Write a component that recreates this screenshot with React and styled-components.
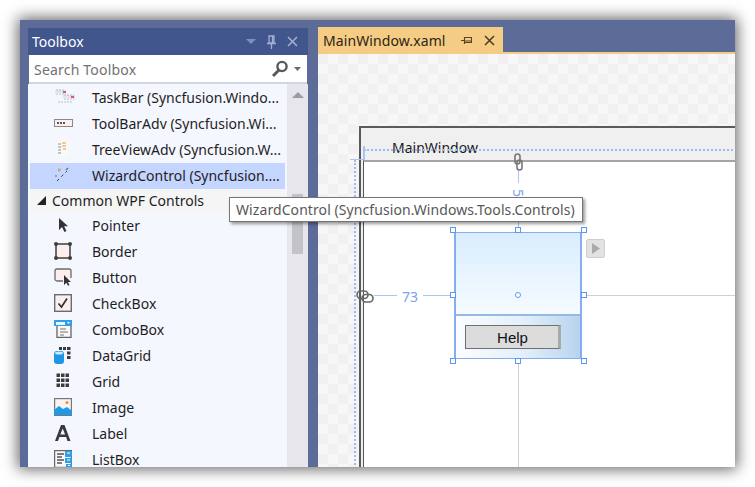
import React from "react";
import styled, { createGlobalStyle } from "styled-components";

const Global = createGlobalStyle`
  html, body {
    margin: 0;
    background: #fff;
    overflow: hidden;
  }
`;

const Page = styled.div`
  width: 755px;
  height: 487px;
  padding: 20px;
  box-sizing: border-box;
  font-family: "Noto Sans", "Open Sans", sans-serif;
`;

const Frame = styled.div`
  width: 715px;
  height: 447px;
  display: flex;
  padding: 8px 0 0 8px;
  gap: 10px;
  box-sizing: border-box;
  background: #5d6b99;
  box-shadow: 0 0 14px 2px rgba(0, 0, 0, 0.62);
  overflow: hidden;
`;

const Panel = styled.div`
  width: 280px;
  display: flex;
  flex-direction: column;
  flex-shrink: 0;
`;

const TitleBar = styled.div`
  height: 27px;
  display: flex;
  align-items: center;
  padding: 0 10px 0 4px;
  background: #40568d;
  color: #fff;
  font-size: 14px;
`;

const TitleText = styled.span`
  flex: 1;
`;

const TitleIcons = styled.div`
  display: flex;
  align-items: center;
  gap: 11px;
`;

const Search = styled.div`
  height: 26px;
  margin: 0 1px;
  display: flex;
  align-items: center;
  padding: 1px 5px 0;
  box-sizing: content-box;
  background: #fff;
  color: #717171;
  font-size: 14px;
  letter-spacing: 0.2px;
  border-bottom: 2px solid #cfd6e5;
`;

const SearchText = styled.span`
  flex: 1;
`;

const Body = styled.div`
  flex: 1;
  display: flex;
  min-height: 0;
  background: #f5f7ff;
`;

const List = styled.div`
  flex: 1;
  padding: 1px 2px 0;
  overflow: hidden;
`;

const Row = styled.div`
  height: ${(p) => (p.$group ? "24px" : "26px")};
  box-sizing: border-box;
  padding-bottom: 2px;
  display: flex;
  align-items: center;
  background: ${(p) => (p.$selected ? "#c4d5ff" : p.$group ? "#f5f5f5" : "transparent")};
  color: #1e1e1e;
  font-size: 14px;
  white-space: nowrap;
`;

const IconSlot = styled.span`
  width: 62px;
  padding-left: 24px;
  box-sizing: border-box;
  display: flex;
  flex-shrink: 0;
`;

const Arrow = styled.span`
  width: 22px;
  padding-left: 7px;
  box-sizing: border-box;
  display: flex;
`;

const Scrollbar = styled.div`
  width: 21px;
  position: relative;
  background: #e6e6ec;
  display: flex;
  flex-direction: column;
  align-items: center;
  padding-top: 8px;
  box-sizing: border-box;
`;

const Thumb = styled.div`
  position: absolute;
  top: 110px;
  left: 5px;
  width: 11px;
  height: 60px;
  background: #c2c3c9;
`;

const Doc = styled.div`
  flex: 1;
  display: flex;
  flex-direction: column;
  min-width: 0;
`;

const TabStrip = styled.div`
  height: 25px;
  display: flex;
  align-items: flex-end;
  margin-top: -1px;
  border-bottom: 2px solid #f5cc84;
  box-sizing: content-box;
`;

const Tab = styled.div`
  width: 185px;
  height: 25px;
  display: flex;
  align-items: center;
  box-sizing: border-box;
  padding: 1px 8px 0 5px;
  background: #f5cc84;
  color: #2d2516;
  font-size: 14px;
  letter-spacing: 0.1px;
`;

const TabTitle = styled.span`
  flex: 1;
`;

const TabIcons = styled.div`
  display: flex;
  align-items: center;
  gap: 12px;
`;

const Canvas = styled.div`
  flex: 1;
  position: relative;
  overflow: hidden;
  background: repeating-conic-gradient(#f7f7f7 0 25%, #f1f1f1 0 50%) 0 0 / 20px 20px;
`;

/* everything below sits on the designer surface, so it is placed by coordinates
   relative to the canvas origin (318, 54 in the page) */
const DesignWindow = styled.div`
  position: absolute;
  left: 41px;
  top: 72px;
  width: 400px;
  height: 360px;
  border: 1px solid #5a5a5a;
  border-top-width: 2px;
  border-left-width: 2px;
  background: #f0f0f0;
`;

const WindowTitle = styled.div`
  position: absolute;
  left: 31px;
  top: 10px;
  color: #1a1a1a;
  font-size: 14px;
`;

const ClientArea = styled.div`
  position: absolute;
  left: 2px;
  top: 32px;
  right: 0;
  bottom: 0;
  background: #fff;
  border-top: 2px solid #a5a5a5;
  border-left: 1px solid #555;
`;

const DotLine = styled.div`
  position: absolute;
  left: ${(p) => p.$x}px;
  top: ${(p) => p.$y}px;
  ${(p) =>
    p.$vertical
      ? "height: 340px; border-left: 2px dotted #9dbcf2;"
      : "width: 400px; border-top: 2px dotted #9dbcf2;"}
`;

const Tick = styled.div`
  position: absolute;
  left: ${(p) => p.$x}px;
  top: ${(p) => p.$y}px;
  width: ${(p) => p.$w}px;
  height: ${(p) => p.$h}px;
  background: ${(p) => p.$color || "#a9c5f5"};
`;

const Measure = styled.div`
  position: absolute;
  left: ${(p) => p.$x}px;
  top: ${(p) => p.$y}px;
  color: #7ba3ec;
  font-size: 14px;
  line-height: 16px;
  transform: ${(p) => (p.$rotate ? "rotate(90deg)" : "none")};
`;

const LinkIcon = styled.div`
  position: absolute;
  left: ${(p) => p.$x}px;
  top: ${(p) => p.$y}px;
  display: flex;
`;

const Wizard = styled.div`
  position: absolute;
  left: 136px;
  top: 178px;
  width: 128px;
  height: 127px;
  box-sizing: border-box;
  border: solid #86adf2;
  border-width: 1px 2px;
  display: flex;
  flex-direction: column;
`;

const WizardTop = styled.div`
  height: 83px;
  box-sizing: border-box;
  background: linear-gradient(#d9edff, #f6fbff);
  border-bottom: 2px solid #94b9e4;
`;

const WizardBottom = styled.div`
  flex: 1;
  padding: 9px 0 0 9px;
  background: linear-gradient(90deg, #fbfdff 0%, #e2effa 55%, #b7d4ee 100%);
`;

const HelpButton = styled.div`
  width: 96px;
  height: 24px;
  box-sizing: border-box;
  display: flex;
  align-items: center;
  justify-content: center;
  padding-left: 1px;
  background: #dcdcdc;
  border: 1px solid #707070;
  border-right: 3px solid #a9a9a9;
  font-family: "Liberation Sans", Arial, sans-serif;
  font-size: 15px;
  color: #111;
`;

const Handle = styled.div`
  position: absolute;
  left: ${(p) => p.$x}px;
  top: ${(p) => p.$y}px;
  width: 4px;
  height: 4px;
  background: #fff;
  border: 1px solid #6096f0;
  border-radius: ${(p) => (p.$round ? "50%" : "0")};
`;

const SmartTag = styled.div`
  position: absolute;
  left: 268px;
  top: 185px;
  width: 19px;
  height: 19px;
  box-sizing: border-box;
  display: flex;
  align-items: center;
  justify-content: center;
  background: #e2e2e2;
  border: 1px solid #cfcfcf;
  border-radius: 2px;
`;

const Tooltip = styled.div`
  position: absolute;
  left: 229px;
  top: 197px;
  height: 25px;
  width: 354px;
  box-sizing: border-box;
  padding-left: 6px;
  display: flex;
  align-items: center;
  background: #fff;
  border: 1px solid #767676;
  box-shadow: 2px 2px 3px rgba(0, 0, 0, 0.4);
  color: #575757;
  font-size: 14px;
  letter-spacing: 0.08px;
  white-space: nowrap;
`;

const Ic = ({ children, w = 26, h = 18 }) => (
  <svg width={w} height={h} viewBox="0 0 26 18" fill="none">
    {children}
  </svg>
);

const icons = {
  taskbar: (
    <Ic>
      <path d="M1 2h11v3H1zM9 7h12v3H9z" fill="#dfe6ee" />
      <path d="M2 2h8M2 6h10M10 7h10M10 11h11M4 14h14" stroke="#a7b3c2" strokeWidth="0.8" strokeDasharray="2 1" />
      <path d="M9 3h3v2H9zM17 8h3v2h-3z" fill="#e0566b" />
    </Ic>
  ),
  toolbar: (
    <Ic>
      <rect x="0.5" y="5.5" width="18" height="7" fill="#fbeeee" stroke="#8a8a8a" />
      <path d="M3 8h2v2H3zM6 8h2v2H6zM9 8h2v2H9z" fill="#555" />
    </Ic>
  ),
  tree: (
    <Ic>
      <rect x="3" y="1" width="11" height="15" fill="#fbf9f4" />
      <path d="M4 4h3M4 7h3M4 10h3M4 13h3" stroke="#a9b2bd" strokeWidth="1.4" />
      <path d="M8 3h4M8 6h4M9 9h3" stroke="#eeb878" strokeWidth="1.4" />
    </Ic>
  ),
  wizard: (
    <Ic>
      <path d="M3 15l10-10" stroke="#444" strokeWidth="1" strokeDasharray="3 3" />
      <path d="M12 4l2-2" stroke="#777" strokeWidth="1.6" />
      <path d="M4 4h3M5 2.5v3" stroke="#c6a32b" strokeWidth="1.2" />
      <circle cx="2" cy="10" r="0.7" fill="#444" />
    </Ic>
  ),
  pointer: (
    <Ic>
      <path d="M5 2v12l3-3 2.5 5 2-1-2.4-4.8H14z" fill="#333" />
    </Ic>
  ),
  border: (
    <Ic>
      <rect x="2" y="2" width="14" height="14" fill="#fbeeee" stroke="#3e3e3e" strokeWidth="1.5" />
      <circle cx="2" cy="2" r="2" fill="#3e3e3e" />
      <circle cx="16" cy="2" r="2" fill="#3e3e3e" />
      <circle cx="2" cy="16" r="2" fill="#3e3e3e" />
      <circle cx="16" cy="16" r="2" fill="#3e3e3e" />
    </Ic>
  ),
  button: (
    <Ic>
      <path d="M9 13H3a2 2 0 0 1-2-2V3a2 2 0 0 1 2-2h12a2 2 0 0 1 2 2v7" fill="#fbeeee" stroke="#6b6b6b" strokeWidth="1.3" />
      <path d="M10 7v10l2.3-2.2 1.7 3 1.5-.8-1.6-3H17z" fill="#333" />
    </Ic>
  ),
  checkbox: (
    <Ic>
      <rect x="0.7" y="0.7" width="16.6" height="16.6" fill="#fbeeee" stroke="#6b6b6b" strokeWidth="1.4" />
      <path d="M4.5 9.5l3 3.5 5.5-8.5" stroke="#333" strokeWidth="1.7" />
    </Ic>
  ),
  combo: (
    <Ic>
      <rect x="0" y="0" width="18" height="6" fill="#2f9fe8" />
      <rect x="2" y="2" width="9" height="3" fill="#eef6fc" />
      <path d="M13 2h3l-1.5 2z" fill="#fff" />
      <path d="M3 6v11.3h14V6" fill="#fbf7f5" stroke="#666" strokeWidth="1.3" />
      <path d="M6 9h6M6 12h8M6 15h4" stroke="#777" strokeWidth="1.2" />
    </Ic>
  ),
  datagrid: (
    <Ic>
      <path d="M5 1h3v3H5zM9 1h3v3H9zM13 1h3.5v3H13zM13 5.5h3.5v3H13zM13 10h3.5v3H13z" fill="#3c3c3c" />
      <rect x="0" y="5" width="10" height="13" rx="3" fill="#1e96e6" />
      <ellipse cx="5" cy="7" rx="4" ry="1.6" fill="#cfe8fa" />
    </Ic>
  ),
  grid: (
    <Ic>
      <path d="M2.5 1.5H6V5H2.5zM7 1.5h3.5V5H7zM11.5 1.5H15V5h-3.5zM2.5 6.5H6V10H2.5zM7 6.5h3.5V10H7zM11.5 6.5H15V10h-3.5zM2.5 11.5H6V15H2.5zM7 11.5h3.5V15H7zM11.5 11.5H15V15h-3.5z" fill="#3c3c3c" />
    </Ic>
  ),
  image: (
    <Ic>
      <rect x="0.6" y="0.6" width="16.8" height="16.8" fill="#fbf2f0" stroke="#777" strokeWidth="1.2" />
      <path d="M0 17v-5l5-4 4 3 4-2 5 4v4z" fill="#1e9be8" />
      <circle cx="13" cy="4.5" r="1.5" fill="#d9963a" />
    </Ic>
  ),
  label: (
    <Ic>
      <path d="M7 1h3.5l6 16h-3l-1.4-4H5.4L4 17H1zM8.7 4.500l-2.400 6h4.800z" fill="#3a3a3a" fillRule="evenodd" />
    </Ic>
  ),
  listbox: (
    <Ic>
      <rect x="0.6" y="0.6" width="16.8" height="16.8" fill="#fbf7f5" stroke="#666" strokeWidth="1.2" />
      <path d="M3 4h7M3 7h5M3 10h7M3 13h5" stroke="#555" strokeWidth="1.3" />
      <path d="M11 1h7v6h-7zM11 8h7v5h-7zM12 14h6v4h-6z" fill="#2f9fe8" />
      <path d="M13 3h3M13 10h3M14 15.5h2" stroke="#fff" strokeWidth="1" />
    </Ic>
  ),
};

const topRows = [
  { icon: "taskbar", label: "TaskBar (Syncfusion.Windo..." },
  { icon: "toolbar", label: "ToolBarAdv (Syncfusion.Wi..." },
  { icon: "tree", label: "TreeViewAdv (Syncfusion.W..." },
  { icon: "wizard", label: "WizardControl (Syncfusion....", selected: true },
];

const commonRows = [
  { icon: "pointer", label: "Pointer" },
  { icon: "border", label: "Border" },
  { icon: "button", label: "Button" },
  { icon: "checkbox", label: "CheckBox" },
  { icon: "combo", label: "ComboBox" },
  { icon: "datagrid", label: "DataGrid" },
  { icon: "grid", label: "Grid" },
  { icon: "image", label: "Image" },
  { icon: "label", label: "Label" },
  { icon: "listbox", label: "ListBox" },
];

const handles = [
  [132, 173], [197, 173], [263, 173],
  [132, 238], [263, 238],
  [132, 304], [197, 304], [263, 304],
];

const ChainH = () => (
  <svg width="18" height="13" viewBox="0 0 18 13" fill="none" stroke="#666" strokeWidth="1.6">
    <rect x="1" y="1" width="11" height="7.5" rx="3.7" />
    <rect x="6" y="4.5" width="11" height="7.5" rx="3.7" />
  </svg>
);

const ChainV = () => (
  <svg width="9" height="18" viewBox="0 0 9 18" fill="none" stroke="#777" strokeWidth="1.6">
    <rect x="1" y="1" width="5" height="10" rx="2.5" />
    <rect x="3" y="7" width="5" height="10" rx="2.5" />
  </svg>
);

export default function App() {
  return (
    <Page>
      <Global />
      <Frame>
        <Panel>
          <TitleBar>
            <TitleText>Toolbox</TitleText>
            <TitleIcons>
              <svg width="10" height="5" viewBox="0 0 10 5">
                <path d="M0 0h10L5 5z" fill="#7f8fbb" />
              </svg>
              <svg width="9" height="14" viewBox="0 0 9 14" fill="none" stroke="#a5b1d2" strokeWidth="1.3">
                <path d="M2 1h5v7H2zM0 8.5h9M4.500 8.500V14M5.500 1v7" />
              </svg>
              <svg width="11" height="11" viewBox="0 0 11 11" stroke="#a5b1d2" strokeWidth="1.5">
                <path d="M1 1l9 9M10 1l-9 9" />
              </svg>
            </TitleIcons>
          </TitleBar>
          <Search>
            <SearchText>Search Toolbox</SearchText>
            <svg width="18" height="18" viewBox="0 0 18 18" fill="none">
              <circle cx="11" cy="6.5" r="4.6" stroke="#595959" strokeWidth="2.4" />
              <path d="M8 10L2 16" stroke="#595959" strokeWidth="3" />
            </svg>
            <svg width="8" height="4" viewBox="0 0 8 4" style={{ marginLeft: 5 }}>
              <path d="M0 0h7L3.5 4z" fill="#6a6a6a" />
            </svg>
          </Search>
          <Body>
            <List>
              {topRows.map((r) => (
                <Row key={r.label} $selected={r.selected}>
                  <IconSlot>{icons[r.icon]}</IconSlot>
                  {r.label}
                </Row>
              ))}
              <Row $group>
                <Arrow>
                  <svg width="9" height="9" viewBox="0 0 9 9">
                    <path d="M9 0v9H0z" fill="#222" />
                  </svg>
                </Arrow>
                Common WPF Controls
              </Row>
              {commonRows.map((r) => (
                <Row key={r.label}>
                  <IconSlot>{icons[r.icon]}</IconSlot>
                  {r.label}
                </Row>
              ))}
            </List>
            <Scrollbar>
              <svg width="12" height="6" viewBox="0 0 12 6">
                <path d="M0 6h12L6 0z" fill="#9c9ca4" />
              </svg>
              <Thumb />
            </Scrollbar>
          </Body>
        </Panel>
        <Doc>
          <TabStrip>
            <Tab>
              <TabTitle>MainWindow.xaml</TabTitle>
              <TabIcons>
                <svg width="11" height="9" viewBox="0 0 11 9" fill="none" stroke="#5a4525" strokeWidth="1.2">
                  <path d="M0 4.5h3M3.5 1v7M3.5 1.5h7v5h-7M3.5 5h7" />
                </svg>
                <svg width="11" height="11" viewBox="0 0 11 11" stroke="#4a3a20" strokeWidth="1.5">
                  <path d="M1 1l9 9M10 1l-9 9" />
                </svg>
              </TabIcons>
            </Tab>
          </TabStrip>
          <Canvas>
            <DesignWindow>
              <WindowTitle>MainWindow</WindowTitle>
              <ClientArea />
            </DesignWindow>
            <DotLine $x={46} $y={95} />
            <DotLine $x={36} $y={106} $vertical />
            <Tick $x={45} $y={92} $w={2} $h={14} />
            <Tick $x={32} $y={105} $w={14} $h={1} />
            <Tick $x={200} $y={116} $w={1} $h={13} />
            <Tick $x={200} $y={166} $w={1} $h={8} />
            <Tick $x={56} $y={241} $w={23} $h={1} />
            <Tick $x={105} $y={241} $w={27} $h={1} />
            <Tick $x={268} $y={241} $w={150} $h={1} $color="#d0d0d0" />
            <Tick $x={200} $y={309} $w={1} $h={110} $color="#d0d0d0" />
            <Measure $x={84} $y={235}>73</Measure>
            <Measure $x={196} $y={131} $rotate>5</Measure>
            <LinkIcon $x={38} $y={236}>
              <ChainH />
            </LinkIcon>
            <LinkIcon $x={196} $y={99}>
              <ChainV />
            </LinkIcon>
            <Wizard>
              <WizardTop />
              <WizardBottom>
                <HelpButton>Help</HelpButton>
              </WizardBottom>
            </Wizard>
            {handles.map(([x, y]) => (
              <Handle key={`${x}-${y}`} $x={x} $y={y} />
            ))}
            <Handle $x={197} $y={238} $round />
            <SmartTag>
              <svg width="8" height="11" viewBox="0 0 8 11">
                <path d="M0 0l8 5.5L0 11z" fill="#aaa" />
              </svg>
            </SmartTag>
          </Canvas>
        </Doc>
      </Frame>
      <Tooltip>WizardControl (Syncfusion.Windows.Tools.Controls)</Tooltip>
    </Page>
  );
}
